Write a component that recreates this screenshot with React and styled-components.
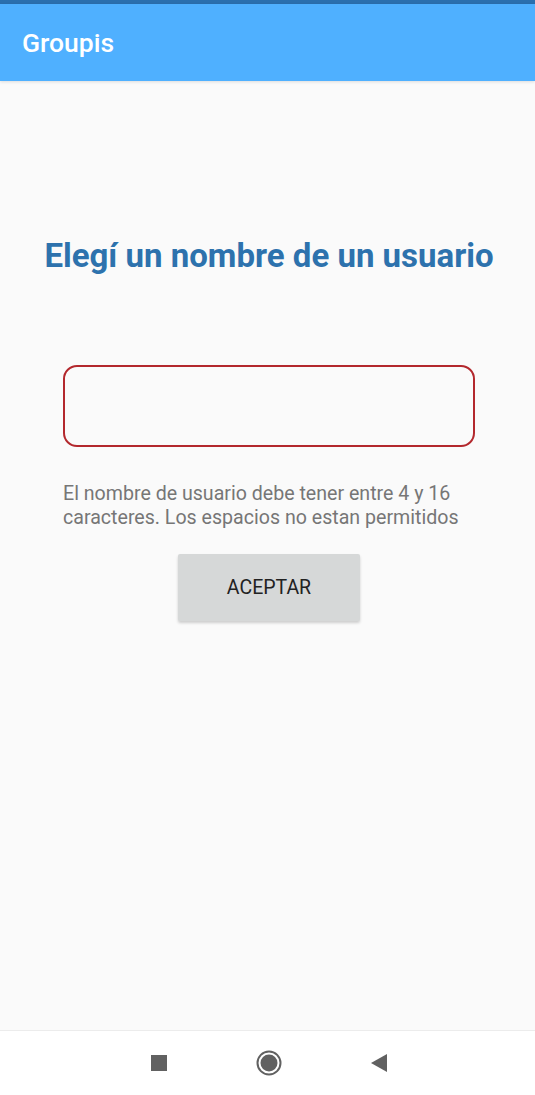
import styled, { createGlobalStyle } from 'styled-components';

const GlobalStyle = createGlobalStyle`
  html, body {
    margin: 0;
    padding: 0;
    background: #fafafa;
    font-family: Roboto, "Liberation Sans", sans-serif;
  }
`;

const Screen = styled.div`
  display: flex;
  flex-direction: column;
  width: 535px;
  height: 1095px;
  background: #fafafa;
`;

const StatusStrip = styled.div`
  height: 4px;
  background: #2a6fae;
`;

const AppBar = styled.header`
  display: flex;
  align-items: center;
  height: 77px;
  padding-left: 22px;
  background: #4fb0ff;
  box-shadow: 0 1px 3px rgba(0, 0, 0, 0.12);

  h1 {
    margin: 0;
    font-size: 26.5px;
    font-weight: 500;
    color: #fff;
  }
`;

const Main = styled.main`
  flex: 1;
  display: flex;
  flex-direction: column;
  align-items: center;
  padding-top: 156px;
  padding-left: 3px;
`;

const Heading = styled.h2`
  margin: 0;
  font-size: 33px;
  line-height: 38px;
  font-weight: 700;
  color: #2d72ad;
  text-align: center;
`;

const Field = styled.input`
  box-sizing: border-box;
  width: 412px;
  height: 82px;
  margin-top: 90px;
  border: 2px solid #b3282d;
  border-radius: 14px;
  background: transparent;
  outline: none;
  font: inherit;
`;

const Hint = styled.p`
  width: 412px;
  margin: 35px 0 0;
  font-size: 19.6px;
  line-height: 24px;
  color: #767676;
`;

const Button = styled.button`
  width: 182px;
  height: 67px;
  margin-top: 24px;
  border: none;
  border-radius: 2px;
  background: #d6d8d8;
  box-shadow: 0 2px 3px rgba(0, 0, 0, 0.18);
  font-family: inherit;
  font-size: 19.5px;
  font-weight: 400;
  color: #222;
`;

const NavBar = styled.nav`
  display: flex;
  align-items: center;
  justify-content: center;
  gap: 84px;
  height: 64px;
  background: #fff;
  border-top: 1px solid #ececec;
  padding-left: 2px;
`;

const NavIcon = styled.svg`
  width: 26px;
  height: 26px;
  fill: #616161;
`;

export default function App() {
  return (
    <Screen>
      <GlobalStyle />
      <StatusStrip />
      <AppBar>
        <h1>Groupis</h1>
      </AppBar>
      <Main>
        <Heading>Elegí un nombre de un usuario</Heading>
        <Field type="text" />
        <Hint>
          El nombre de usuario debe tener entre 4 y 16 caracteres. Los espacios no estan permitidos
        </Hint>
        <Button>ACEPTAR</Button>
      </Main>
      <NavBar>
        <NavIcon viewBox="0 0 26 26">
          <rect x="5" y="5" width="16" height="16" />
        </NavIcon>
        <NavIcon viewBox="0 0 26 26">
          <circle cx="13" cy="13" r="11.5" fill="none" stroke="#616161" strokeWidth="2" />
          <circle cx="13" cy="13" r="8.5" />
        </NavIcon>
        <NavIcon viewBox="0 0 26 26">
          <polygon points="21,4 21,22 5,13" />
        </NavIcon>
      </NavBar>
    </Screen>
  );
}
